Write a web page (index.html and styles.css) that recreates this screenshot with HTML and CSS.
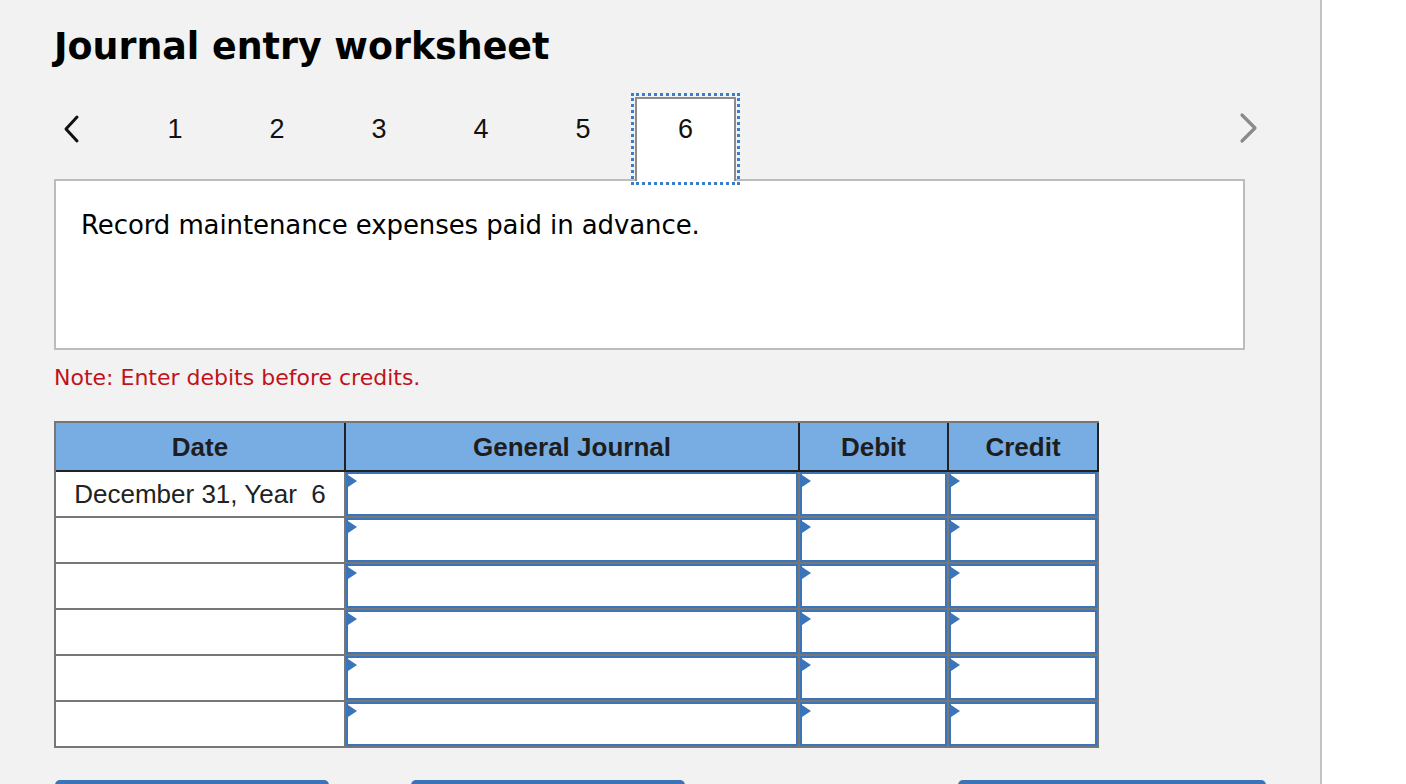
FILE: index.html
```html
<!DOCTYPE html>
<html>
<head>
<meta charset="utf-8">
<link rel="stylesheet" href="styles.css">
</head>
<body>
<div class="page">
  <div class="main">
    <h1 class="title">Journal entry worksheet</h1>
    <div class="nav">
      <div class="prev"><svg width="22" height="30" viewBox="0 0 22 30"><path d="M17 3 L6 15 L17 27" fill="none" stroke="#111" stroke-width="3" stroke-linecap="round" stroke-linejoin="round"/></svg></div>
      <div class="tabs">
        <div class="tab">1</div>
        <div class="tab">2</div>
        <div class="tab">3</div>
        <div class="tab">4</div>
        <div class="tab">5</div>
        <div class="tab active">6</div>
      </div>
      <div class="next"><svg width="22" height="32" viewBox="0 0 22 32"><path d="M4 3 L17 16 L4 29" fill="none" stroke="#8a8a8a" stroke-width="3.2" stroke-linecap="round" stroke-linejoin="round"/></svg></div>
    </div>
    <div class="box">
      <p class="prompt">Record maintenance expenses paid in advance.</p>
    </div>
    <p class="note">Note: Enter debits before credits.</p>
    <div class="jt">
      <div class="jt-head">
        <div class="th">Date</div>
        <div class="th">General Journal</div>
        <div class="th">Debit</div>
        <div class="th">Credit</div>
      </div>
      <div class="jt-body">
        <div class="td date">December 31, Year&nbsp; 6</div><div class="td inp"></div><div class="td inp"></div><div class="td inp"></div>
        <div class="td date"></div><div class="td inp"></div><div class="td inp"></div><div class="td inp"></div>
        <div class="td date"></div><div class="td inp"></div><div class="td inp"></div><div class="td inp"></div>
        <div class="td date"></div><div class="td inp"></div><div class="td inp"></div><div class="td inp"></div>
        <div class="td date"></div><div class="td inp"></div><div class="td inp"></div><div class="td inp"></div>
        <div class="td date"></div><div class="td inp"></div><div class="td inp"></div><div class="td inp"></div>
      </div>
    </div>
    <div class="buttons">
      <div class="btn b1"></div>
      <div class="btn b2"></div>
      <div class="btn b3"></div>
    </div>
  </div>
  <div class="side"></div>
</div>
</body>
</html>
```
FILE: styles.css
```css
html, body {
  margin: 0;
  padding: 0;
  background: #ffffff;
}
.page {
  display: flex;
  height: 784px;
  overflow: hidden;
}
.main {
  width: 1322px;
  flex: none;
  background: #f2f2f2;
  border-right: 2px solid #c2c2c2;
  padding-left: 54px;
  box-sizing: border-box;
  height: 784px;
  overflow: hidden;
}
.side {
  flex: 1;
  background: #fff;
}
.title {
  margin: 0;
  padding-top: 26px;
  font-family: "DejaVu Sans", Verdana, sans-serif;
  font-weight: bold;
  font-size: 36.4px;
  line-height: 42px;
  color: #000;
}
.nav {
  display: flex;
  align-items: flex-start;
  margin-top: 29px;
  height: 84px;
  width: 1191px;
  position: relative;
  z-index: 2;
}
.prev {
  width: 70px;
  padding-left: 6px;
  padding-top: 17px;
  box-sizing: border-box;
}
.tabs {
  display: flex;
}
.tab {
  width: 102px;
  height: 84px;
  box-sizing: border-box;
  text-align: center;
  font-family: "Liberation Sans", Arial, sans-serif;
  font-size: 27px;
  padding-top: 17px;
  color: #111;
}
.tab.active {
  margin-left: 1px;
  background: #fff;
  border: 2px solid #8c8c8c;
  border-bottom: none;
  width: 101px;
  height: 84px;
  outline: 3px dotted #3d7cc9;
  outline-offset: 1px;
  padding-top: 15px;
}
.next {
  margin-left: auto;
  margin-right: -15px;
  padding-top: 15px;
}
.box {
  width: 1191px;
  height: 171px;
  margin-top: -2px;
  box-sizing: border-box;
  border: 2px solid #bcbcbc;
  background: #fff;
  padding: 29px 0 0 25px;
}
.prompt {
  margin: 0;
  font-family: "DejaVu Sans", Verdana, sans-serif;
  font-size: 26px;
  letter-spacing: -0.1px;
  color: #000;
}
.note {
  margin: 15px 0 0 0;
  font-family: "DejaVu Sans", Verdana, sans-serif;
  font-size: 22px;
  color: #c0121c;
}
.jt {
  margin-top: 31px;
  width: 1045px;
}
.jt-head {
  display: grid;
  grid-template-columns: 288px 452px 147px 148px;
  gap: 2px;
  background: #222;
  border-top: 2px solid #777;
  border-left: 2px solid #777;
  padding: 0 2px 2px 0;
}
.th {
  background: #78ade3;
  height: 47px;
  display: flex;
  align-items: center;
  justify-content: center;
  font-family: "Liberation Sans", Arial, sans-serif;
  font-weight: bold;
  font-size: 26px;
  color: #1e1e1e;
  padding-top: 1px;
  box-sizing: border-box;
}
.jt-body {
  display: grid;
  grid-template-columns: 288px 452px 147px 148px;
  grid-auto-rows: 44px;
  gap: 2px;
  background: #777;
  padding: 0 2px 2px 2px;
}
.td {
  background: #fff;
  position: relative;
}
.td.date {
  display: flex;
  align-items: center;
  justify-content: center;
  font-family: "Liberation Sans", Arial, sans-serif;
  font-size: 26px;
  color: #222;
  padding-top: 1px;
  box-sizing: border-box;
}
.td.inp {
  border: 2px solid #3a74ba;
  box-sizing: border-box;
}
.td.inp::before {
  content: "";
  position: absolute;
  left: 0;
  top: 1px;
  border-left: 9px solid #3a74ba;
  border-top: 6px solid transparent;
  border-bottom: 6px solid transparent;
}
.buttons {
  display: flex;
  margin-top: 32px;
  margin-left: 1px;
  width: 1211px;
}
.btn {
  height: 20px;
  background: #3b74b8;
  border-radius: 5px 5px 0 0;
}
.b1 { width: 274px; }
.b2 { width: 274px; margin-left: 82px; }
.b3 { width: 308px; margin-left: auto; }
```
